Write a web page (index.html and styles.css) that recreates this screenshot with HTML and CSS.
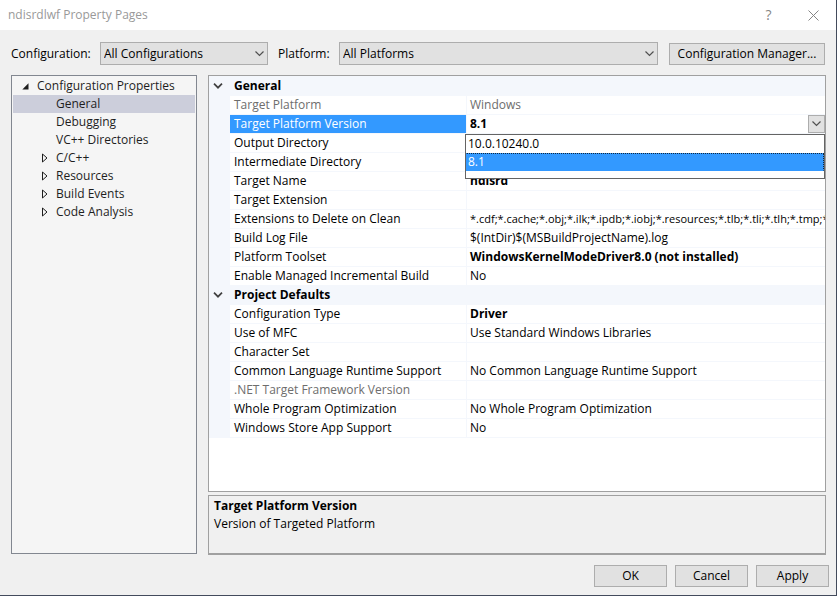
FILE: index.html
```html
<!DOCTYPE html>
<html lang="en">
<head>
<meta charset="utf-8">
<title>ndisrdlwf Property Pages</title>
<link rel="stylesheet" href="styles.css">
</head>
<body>
<div class="dialog">
  <header class="titlebar">
    <h1 class="title">ndisrdlwf Property Pages</h1>
    <button class="caption-button" type="button" aria-label="Help"><span class="help-mark">?</span></button>
    <button class="caption-button" type="button" aria-label="Close">
      <svg width="11" height="11" viewBox="0 0 11 11"><path d="M.5 .5l10 10M10.5 .5l-10 10" fill="none" stroke="#858585"/></svg>
    </button>
  </header>

  <div class="toolbar">
    <label class="configuration-label" for="configuration">Configuration:</label>
    <div class="combo configuration-combo">
      <select id="configuration"><option>All Configurations</option></select>
      <svg class="chevron" width="9" height="6" viewBox="0 0 9 6"><path d="M.5 .5l4 4 4-4" fill="none" stroke="#505050" stroke-width="1.2"/></svg>
    </div>
    <label class="platform-label" for="platform">Platform:</label>
    <div class="combo platform-combo">
      <select id="platform"><option>All Platforms</option></select>
      <svg class="chevron" width="9" height="6" viewBox="0 0 9 6"><path d="M.5 .5l4 4 4-4" fill="none" stroke="#505050" stroke-width="1.2"/></svg>
    </div>
    <button class="button manager-button" type="button">Configuration Manager...</button>
  </div>

  <main class="content">
    <nav class="tree" aria-label="Property categories">
      <ul>
        <li>
          <a class="node root" href="#root"><svg class="arrow" width="7" height="7" viewBox="0 0 7 7"><path d="M6.500 .3v6.200h-6.200z" fill="#1e1e1e"/></svg>Configuration Properties</a>
          <ul>
            <li><a class="node selected" href="#general"><span class="arrow"></span>General</a></li>
            <li><a class="node" href="#debugging"><span class="arrow"></span>Debugging</a></li>
            <li><a class="node" href="#directories"><span class="arrow"></span>VC++ Directories</a></li>
            <li><a class="node" href="#cpp"><svg class="arrow" width="7" height="10" viewBox="0 0 7 10"><path d="M.5 1v8l4.500-4z" fill="none" stroke="#1e1e1e"/></svg>C/C++</a></li>
            <li><a class="node" href="#resources"><svg class="arrow" width="7" height="10" viewBox="0 0 7 10"><path d="M.5 1v8l4.500-4z" fill="none" stroke="#1e1e1e"/></svg>Resources</a></li>
            <li><a class="node" href="#events"><svg class="arrow" width="7" height="10" viewBox="0 0 7 10"><path d="M.5 1v8l4.500-4z" fill="none" stroke="#1e1e1e"/></svg>Build Events</a></li>
            <li><a class="node" href="#analysis"><svg class="arrow" width="7" height="10" viewBox="0 0 7 10"><path d="M.5 1v8l4.500-4z" fill="none" stroke="#1e1e1e"/></svg>Code Analysis</a></li>
          </ul>
        </li>
      </ul>
    </nav>

    <div class="pane">
      <section class="grid">
        <table class="properties">
          <colgroup><col class="gutter-column"><col class="name-column"><col></colgroup>
          <tbody>
            <tr class="category"><td><button class="toggle" type="button" aria-label="Collapse General"><svg width="10" height="6" viewBox="0 0 10 6"><path d="M1 .7l4 4 4-4" fill="none" stroke="#404040" stroke-width="1.700"/></svg></button></td><th colspan="2">General</th></tr>
            <tr class="disabled"><td></td><th>Target Platform</th><td>Windows</td></tr>
            <tr class="active"><td></td><th><label for="version">Target Platform Version</label></th>
              <td>
                <div class="editor">
                  <input id="version" type="text" value="8.1">
                  <button class="drop-button" type="button" aria-label="Show versions"><svg width="9" height="6" viewBox="0 0 9 6"><path d="M.5 .5l4 4 4-4" fill="none" stroke="#505050" stroke-width="1.200"/></svg></button>
                  <ul class="options" role="listbox" aria-label="Target Platform Version">
                    <li role="option" aria-selected="false">10.0.10240.0</li>
                    <li class="chosen" role="option" aria-selected="true">8.1</li>
                  </ul>
                </div>
              </td></tr>
            <tr><td></td><th>Output Directory</th><td></td></tr>
            <tr><td></td><th>Intermediate Directory</th><td></td></tr>
            <tr><td></td><th>Target Name</th><td><b>ndisrd</b></td></tr>
            <tr><td></td><th>Target Extension</th><td></td></tr>
            <tr><td></td><th>Extensions to Delete on Clean</th><td class="long-value">*.cdf;*.cache;*.obj;*.ilk;*.ipdb;*.iobj;*.resources;*.tlb;*.tli;*.tlh;*.tmp;*</td></tr>
            <tr><td></td><th>Build Log File</th><td>$(IntDir)$(MSBuildProjectName).log</td></tr>
            <tr><td></td><th>Platform Toolset</th><td><b>WindowsKernelModeDriver8.0 (not installed)</b></td></tr>
            <tr><td></td><th>Enable Managed Incremental Build</th><td>No</td></tr>
          </tbody>
          <tbody>
            <tr class="category"><td><button class="toggle" type="button" aria-label="Collapse Project Defaults"><svg width="10" height="6" viewBox="0 0 10 6"><path d="M1 .7l4 4 4-4" fill="none" stroke="#404040" stroke-width="1.700"/></svg></button></td><th colspan="2">Project Defaults</th></tr>
            <tr><td></td><th>Configuration Type</th><td><b>Driver</b></td></tr>
            <tr><td></td><th>Use of MFC</th><td>Use Standard Windows Libraries</td></tr>
            <tr><td></td><th>Character Set</th><td></td></tr>
            <tr><td></td><th>Common Language Runtime Support</th><td>No Common Language Runtime Support</td></tr>
            <tr class="disabled"><td></td><th>.NET Target Framework Version</th><td></td></tr>
            <tr><td></td><th>Whole Program Optimization</th><td>No Whole Program Optimization</td></tr>
            <tr><td></td><th>Windows Store App Support</th><td>No</td></tr>
          </tbody>
        </table>
      </section>
      <section class="description">
        <h2>Target Platform Version</h2>
        <p>Version of Targeted Platform</p>
      </section>
    </div>
  </main>

  <footer class="actions">
    <button class="button" type="button">OK</button>
    <button class="button" type="button">Cancel</button>
    <button class="button" type="button">Apply</button>
  </footer>
</div>
</body>
</html>
```
FILE: styles.css
```css
* {
  box-sizing: border-box;
}

body {
  margin: 0;
  font: 12px/18px "Open Sans", "Noto Sans", sans-serif;
  color: #000;
}

ul, h1, h2, p {
  margin: 0;
  padding: 0;
  list-style: none;
}

button, select, input {
  font: inherit;
  color: inherit;
  margin: 0;
}

svg {
  display: block;
}

.dialog {
  display: flex;
  flex-direction: column;
  min-height: 100vh;
  background: #f0f0f0;
  border: solid #434b5c;
  border-width: 0 1px 1px 0;
}

.titlebar {
  display: flex;
  align-items: center;
  height: 30px;
  padding-left: 8px;
  background: #fff;
  color: #999;
}

.title {
  flex: 1;
  font-size: 12px;
  font-weight: 400;
}

.caption-button {
  display: flex;
  align-items: center;
  justify-content: center;
  width: 45px;
  height: 28px;
  padding: 0;
  border: 0;
  background: none;
}

.help-mark {
  font-size: 14px;
  color: #858585;
}

.toolbar {
  display: flex;
  align-items: center;
  padding: 12px 11px 10px;
}

.configuration-label {
  width: 89px;
}

.platform-label {
  width: 61px;
  margin-left: 10px;
}

.combo {
  position: relative;
}

.configuration-combo {
  width: 168px;
}

.platform-combo {
  flex: 1;
}

.combo select {
  display: block;
  appearance: none;
  width: 100%;
  height: 23px;
  padding: 0 20px 0 3px;
  border: 1px solid #adadad;
  border-radius: 0;
  background: #e1e1e1;
}

.chevron {
  position: absolute;
  right: 4px;
  top: 9px;
  pointer-events: none;
}

.button {
  width: 73px;
  height: 22px;
  padding: 0;
  border: 1px solid #adadad;
  background: #e1e1e1;
  line-height: 20px;
}

.manager-button {
  width: 156px;
  margin-left: 11px;
}

.content {
  flex: 1;
  display: flex;
  gap: 11px;
  padding: 0 10px 0 11px;
}

.tree {
  width: 186px;
  padding: 1px;
  margin-bottom: 1px;
  border: 1px solid #828790;
  background: #f5f5f5;
}

.node {
  display: flex;
  align-items: center;
  height: 18px;
  padding-left: 29px;
  color: #1e1e1e;
  text-decoration: none;
}

.root {
  padding-left: 9px;
}

.arrow {
  width: 7px;
  margin-right: 7px;
}

.root .arrow {
  margin-right: 8px;
}

.selected {
  background: #cccedb;
}

.pane {
  flex: 1;
  min-width: 0;
  display: flex;
  flex-direction: column;
  gap: 3px;
}

.grid {
  flex: 1;
  border: 1px solid #a0a0a0;
  background: #fff;
}

.properties {
  width: 100%;
  table-layout: fixed;
  border-spacing: 0;
  border-top: 1px solid #f4f7fc;
}

.gutter-column {
  width: 21px;
}

.name-column {
  width: 236px;
}

.properties td,
.properties th {
  height: 19px;
  padding: 0 0 0 4px;
  border-bottom: 1px solid #f4f7fc;
  font-weight: 400;
  text-align: left;
  white-space: nowrap;
  overflow: hidden;
}

.properties td:last-child {
  border-left: 1px solid #f4f7fc;
  padding-left: 3px;
}

.properties td:first-child,
.properties .category th {
  background: #f4f7fc;
}

.properties .category th,
.properties b {
  font-weight: 700;
}

.properties .disabled {
  color: #6d6d6d;
}

.properties .active th {
  background: #3399ff;
  color: #fff;
}

.properties .active td {
  overflow: visible;
}

.properties .long-value {
  font-size: 11px;
}

.toggle {
  display: flex;
  align-items: center;
  width: 10px;
  height: 18px;
  padding: 0;
  border: 0;
  background: none;
}

.editor {
  position: relative;
  display: flex;
  height: 18px;
}

.editor input {
  flex: 1;
  min-width: 0;
  padding: 0;
  border: 0;
  outline: 0;
  font-weight: 700;
  background: none;
}

.drop-button {
  display: flex;
  align-items: center;
  justify-content: center;
  width: 17px;
  padding: 0;
  border: 1px solid #adadad;
  background: #e1e1e1;
}

.options {
  position: absolute;
  z-index: 1;
  top: 19px;
  left: -5px;
  right: 0;
  padding-bottom: 7px;
  border: 1px solid #646464;
  background: #fff;
}

.options li {
  height: 18px;
  padding-left: 2px;
}

.options .chosen {
  padding-left: 1px;
  border: 1px dotted #102840;
  background: #3399ff;
  color: #fff;
  line-height: 16px;
  border-bottom-color: #3399ff;
  border-left-color: #3399ff;
}

.description {
  height: 60px;
  padding: 1px 5px;
  border: 1px solid #a0a0a0;
  border-bottom-width: 2px;
}

.description h2 {
  font-size: 12px;
  font-weight: 700;
}

.actions {
  display: flex;
  justify-content: flex-end;
  gap: 8px;
  padding: 10px 7px 8px;
}
```
